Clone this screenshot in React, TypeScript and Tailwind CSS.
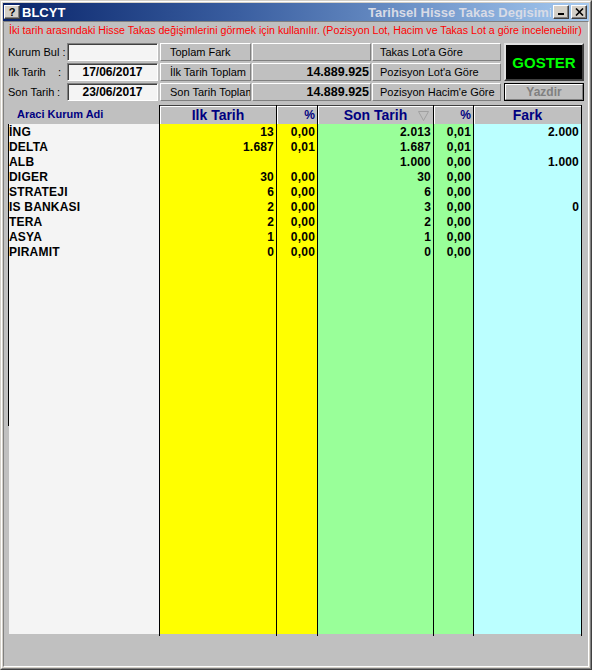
import React from "react";

type Row = { name: string; ilk: string; ilkP: string; son: string; sonP: string; fark: string };

const rows: Row[] = [
  { name: "İNG", ilk: "13", ilkP: "0,00", son: "2.013", sonP: "0,01", fark: "2.000" },
  { name: "DELTA", ilk: "1.687", ilkP: "0,01", son: "1.687", sonP: "0,01", fark: "" },
  { name: "ALB", ilk: "", ilkP: "", son: "1.000", sonP: "0,00", fark: "1.000" },
  { name: "DIGER", ilk: "30", ilkP: "0,00", son: "30", sonP: "0,00", fark: "" },
  { name: "STRATEJI", ilk: "6", ilkP: "0,00", son: "6", sonP: "0,00", fark: "" },
  { name: "IS BANKASI", ilk: "2", ilkP: "0,00", son: "3", sonP: "0,00", fark: "0" },
  { name: "TERA", ilk: "2", ilkP: "0,00", son: "2", sonP: "0,00", fark: "" },
  { name: "ASYA", ilk: "1", ilkP: "0,00", son: "1", sonP: "0,00", fark: "" },
  { name: "PIRAMIT", ilk: "0", ilkP: "0,00", son: "0", sonP: "0,00", fark: "" },
];

const raised = "border border-white border-r-[#808080] border-b-[#808080]";
const sunken = "border border-[#808080] border-r-white border-b-white shadow-[inset_1px_1px_0_#404040]";

function TitleButton({ children }: { children: React.ReactNode }) {
  return (
    <div className="w-[16px] h-[14px] bg-[#d4d0c8] border border-white border-r-[#404040] border-b-[#404040] flex items-center justify-center shadow-[inset_-1px_-1px_0_#808080]">
      {children}
    </div>
  );
}

function DataColumn({
  width,
  bg,
  header,
  headerClass,
  values,
  last,
  sort,
}: {
  width: string;
  bg: string;
  header: string;
  headerClass: string;
  values: string[];
  last?: boolean;
  sort?: boolean;
}) {
  return (
    <div className={`${width} flex flex-col border-l border-black ${last ? "border-r" : ""}`}>
      <div
        className={`relative h-[19px] bg-[#c0c0c0] border-t border-[#404040] shadow-[inset_1px_1px_0_#ffffff] flex items-center text-[#000080] font-bold ${headerClass}`}
      >
        {header}
        {sort && (
          <svg className="absolute right-[4px] top-[4px]" width="11" height="11" viewBox="0 0 11 11">
            <path d="M0.5 1.5 L10.5 1.5 L5.5 10.5 Z" fill="none" stroke="#a0a0a0" strokeWidth="1" />
          </svg>
        )}
      </div>
      <div className={`h-[510px] ${bg}`}>
        {values.map((v, i) => (
          <div key={i} className="h-[15px] leading-[16px] text-right pr-[2px] text-[12px] font-bold text-black tracking-[0.2px]">
            {v}
          </div>
        ))}
      </div>
    </div>
  );
}

export default function App() {
  return (
    <div className="w-[592px] h-[670px] font-['Liberation_Sans',Arial,sans-serif] bg-[#d4d0c8] border border-[#d4d0c8] border-r-[#404040] border-b-[#404040] overflow-hidden">
      <div className="h-full border border-white border-r-[#808080] border-b-[#808080] p-px flex flex-col">
        {/* title bar */}
        <div className="h-[18px] shrink-0 bg-linear-to-r from-[#0a246a] via-[#3a5ea0] via-40% to-[#a6caf0] flex items-center pl-px pr-[2px]">
          <TitleButton>
            <span className="text-[11px] leading-none font-bold text-black">?</span>
          </TitleButton>
          <span className="ml-[2px] text-[13px] font-bold text-white leading-none">BLCYT</span>
          <div className="ml-auto w-[183px] overflow-hidden whitespace-nowrap text-[13px] font-bold text-[#d8dbe6] leading-none">
            Tarihsel Hisse Takas Degisimi
          </div>
          <div className="ml-[2px]">
            <TitleButton>
              <svg width="8" height="8" viewBox="0 0 8 8">
                <rect x="1" y="5" width="6" height="2" fill="#000" />
              </svg>
            </TitleButton>
          </div>
          <div className="ml-[2px]">
            <TitleButton>
              <svg width="9" height="8" viewBox="0 0 9 8">
                <path d="M1 0.5 L8 7.5 M8 0.5 L1 7.5" stroke="#000" strokeWidth="1.6" />
              </svg>
            </TitleButton>
          </div>
        </div>

        {/* client */}
        <div className="flex-1 flex flex-col bg-[#c0c0c0] border border-[#808080] border-r-white border-b-white px-[4px]">
          <div className="h-[17px] leading-[17px] pl-px text-[10.65px] text-[#ff0000] whitespace-nowrap">
            İki tarih arasındaki Hisse Takas değişimlerini görmek için kullanılır. (Pozisyon Lot, Hacim ve Takas Lot a göre incelenebilir)
          </div>

          {/* form */}
          <div className="mt-[4px] grid grid-cols-[59px_93px_92px_120px_132px_80px] grid-rows-[18px_18px_18px] gap-y-[2px] text-[11px] text-black">
            <div className="flex items-center">Kurum Bul :</div>
            <div className={`w-[91px] bg-[#f4f4f4] ${sunken}`} />
            <div className={`w-[91px] bg-[#c0c0c0] ${raised} flex items-center pl-[9px]`}>Toplam Fark</div>
            <div className={`w-[119px] bg-[#c0c0c0] ${raised}`} />
            <div className={`w-[129px] bg-[#c0c0c0] ${raised} flex items-center pl-[7px]`}>Takas Lot'a Göre</div>
            <div className="row-span-2 h-[38px] bg-black border-2 border-[#e0e0e0] border-r-[#404040] border-b-[#404040] flex items-center justify-center">
              <span className="text-[15px] font-bold text-[#00ff00] leading-none">GOSTER</span>
            </div>

            <div className="flex items-center">
              <span className="w-[50px]">Ilk Tarih</span>
              <span>:</span>
            </div>
            <div className={`w-[91px] bg-[#f4f4f4] ${sunken} flex items-center justify-center text-[12px] font-bold`}>17/06/2017</div>
            <div className={`w-[91px] bg-[#c0c0c0] ${raised} flex items-center pl-[9px]`}>İlk Tarih Toplam</div>
            <div className={`w-[119px] bg-[#c0c0c0] ${raised} flex items-center justify-end pr-px text-[12.5px] font-bold`}>14.889.925</div>
            <div className={`w-[129px] bg-[#c0c0c0] ${raised} flex items-center pl-[7px]`}>Pozisyon Lot'a Göre</div>

            <div className="flex items-center">
              <span className="w-[49px]">Son Tarih</span>
              <span>:</span>
            </div>
            <div className={`w-[91px] bg-[#f4f4f4] ${sunken} flex items-center justify-center text-[12px] font-bold`}>23/06/2017</div>
            <div className={`w-[91px] bg-[#c0c0c0] ${raised} flex items-center pl-[9px] overflow-hidden whitespace-nowrap`}>Son Tarih Toplam</div>
            <div className={`w-[119px] bg-[#c0c0c0] ${raised} flex items-center justify-end pr-px text-[12.5px] font-bold`}>14.889.925</div>
            <div className={`w-[129px] bg-[#c0c0c0] ${raised} flex items-center pl-[7px]`}>Pozisyon Hacim'e Göre</div>
            <div className="h-[18px] border border-black">
              <div className={`h-full bg-[#c0c0c0] ${raised} flex items-center justify-center text-[12px] font-bold text-[#808080]`}>
                Yazdir
              </div>
            </div>
          </div>

          {/* grid */}
          <div className="mt-[4px] h-[531px] shrink-0 flex">
            <div className="w-[151px] flex flex-col">
              <div className="h-[19px] flex items-center pl-[9px] text-[11px] font-bold text-[#000080]">Araci Kurum Adi</div>
              <div className="h-[302px] border-l border-black bg-[#f4f4f4]">
                {rows.map((r) => (
                  <div key={r.name} className="h-[15px] leading-[16px] text-[12px] font-bold text-black whitespace-nowrap tracking-[0.2px]">
                    {r.name}
                  </div>
                ))}
              </div>
              <div className="h-[208px] ml-px bg-[#f4f4f4]" />
            </div>
            <DataColumn
              width="w-[117px]"
              bg="bg-[#ffff00]"
              header="Ilk Tarih"
              headerClass="justify-center text-[14px]"
              values={rows.map((r) => r.ilk)}
            />
            <DataColumn
              width="w-[41px]"
              bg="bg-[#ffff00]"
              header="%"
              headerClass="justify-end pr-[2px] text-[12px]"
              values={rows.map((r) => r.ilkP)}
            />
            <DataColumn
              width="w-[116px]"
              bg="bg-[#99ff99]"
              header="Son Tarih"
              headerClass="justify-center text-[14px]"
              values={rows.map((r) => r.son)}
              sort
            />
            <DataColumn
              width="w-[40px]"
              bg="bg-[#99ff99]"
              header="%"
              headerClass="justify-end pr-[2px] text-[12px]"
              values={rows.map((r) => r.sonP)}
            />
            <DataColumn
              width="w-[109px]"
              bg="bg-[#bbffff]"
              header="Fark"
              headerClass="justify-center text-[14px]"
              values={rows.map((r) => r.fark)}
              last
            />
          </div>
        </div>
      </div>
    </div>
  );
}
